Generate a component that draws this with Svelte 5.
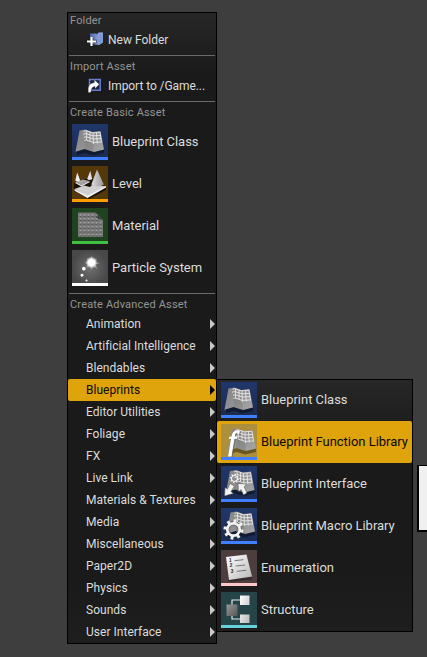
<script>
  const basic = [
    { label: 'Blueprint Class', icon: 'blueprint', bar: '#4080ff' },
    { label: 'Level', icon: 'level', bar: '#ff9c00' },
    { label: 'Material', icon: 'material', bar: '#40c040' },
    { label: 'Particle System', icon: 'particle', bar: '#ffffff' }
  ];
  const advanced = ['Animation', 'Artificial Intelligence', 'Blendables', 'Blueprints', 'Editor Utilities', 'Foliage', 'FX', 'Live Link', 'Materials & Textures', 'Media', 'Miscellaneous', 'Paper2D', 'Physics', 'Sounds', 'User Interface'];
  const blueprints = [
    { label: 'Blueprint Class', icon: 'blueprint', bar: '#4080ff' },
    { label: 'Blueprint Function Library', icon: 'function', bar: '#4080ff', active: true },
    { label: 'Blueprint Interface', icon: 'interface', bar: '#4080ff' },
    { label: 'Blueprint Macro Library', icon: 'macro', bar: '#4080ff' },
    { label: 'Enumeration', icon: 'enumeration', bar: '#ffc8c8' },
    { label: 'Structure', icon: 'structure', bar: '#68d0da' }
  ];
  const teeth = [0, 45, 90, 135, 180, 225, 270, 315];
  const dots = [0, 1, 2, 3, 4, 5];
</script>

{#snippet gear(cx, cy, r)}
  <g fill="#f2f2f2" transform="translate({cx} {cy})">
    <circle r={r * 0.85} fill="none" stroke="#222" stroke-opacity=".5" stroke-width={r * 0.55} />
    {#each teeth as a}
      <rect x={-r * 0.19} y={-r * 1.32} width={r * 0.38} height={r * 0.5} transform="rotate({a + 10})" />
    {/each}
    <circle r={r * 0.82} fill="none" stroke="#f2f2f2" stroke-width={r * 0.36} />
  </g>
{/snippet}

{#snippet sheet()}
  <path d="M5 27 13 25 21 27 32 25 32 29 21 31.5 13 29 5 31z" fill="#000" opacity=".4" />
  <path d="M7.5 6.5 13.5 5.5 20.5 8 28.5 7 32 25.5 22 28 12.5 25 3.5 27.8z" fill="url(#paper)" />
  <path d="M13.5 12 20.5 15 22 28 12.5 25z" fill="#666" opacity=".25" />
  <g fill="none" stroke="#e8e8e8" stroke-width=".9">
    <path d="M11.5 7.3 14 6.7 20.5 8.8 28 8.2M11 10.2 14 9.6 20.8 11.8 28.6 11.4M12 13.2 14 12.8 21 15 29 14.6M12.5 16.4 14 16 21.3 18.4 29.5 18" />
    <path d="M14.6 7V16M18 8V17.3M21 9 21.4 20M24.5 8.5 25.3 19.5M28 8.2 29.5 18.5" />
  </g>
{/snippet}

{#snippet asset(kind, bar)}
  <svg class="thumb" viewBox="0 0 36 36" width="36" height="36">
    <defs>
      <linearGradient id="paper" x2="1" y2="1"><stop stop-color="#858585" /><stop offset=".45" stop-color="#8f8f8f" /><stop offset="1" stop-color="#a8a8a8" /></linearGradient>
      <linearGradient id="blue" y2="1" x2="0"><stop stop-color="#20376c" /><stop offset="1" stop-color="#1b2a4e" /></linearGradient>
      <linearGradient id="light" x2="1" y2="1"><stop stop-color="#fff" /><stop offset="1" stop-color="#b8b8b8" /></linearGradient>
      <linearGradient id="dark" x2="1" y2="1"><stop stop-color="#999" /><stop offset="1" stop-color="#555" /></linearGradient>
      <linearGradient id="cone"><stop stop-color="#f2f2f2" /><stop offset=".5" stop-color="#e2e2e2" /><stop offset="1" stop-color="#999" /></linearGradient>
      <radialGradient id="grey"><stop stop-color="#707070" /><stop offset="1" stop-color="#484848" /></radialGradient>
      <radialGradient id="glow"><stop stop-color="#fff" /><stop offset=".5" stop-color="#fff" /><stop offset="1" stop-color="#fff" stop-opacity="0" /></radialGradient>
    </defs>
    {#if kind === 'blueprint'}
      <rect width="36" height="36" fill="url(#blue)" />
      {@render sheet()}
    {:else if kind === 'function'}
      <rect width="36" height="36" fill="#ae8f3b" />
      <g transform="translate(3 -1)">{@render sheet()}</g>
      <g font-family="Liberation Serif, serif" font-style="italic" font-size="27">
        <text x="7.5" y="26" fill="#fff" stroke="#fff" stroke-width="1.1" style="paint-order: stroke; filter: drop-shadow(1px 1px 0 #5558)">f</text>
      </g>
    {:else if kind === 'interface'}
      <rect width="36" height="36" fill="url(#blue)" />
      <g transform="translate(1.5 -1.5)">{@render sheet()}</g>
      {@render gear(13.5, 12.5, 3.6)}
      <path d="M9 17.5 13.5 20 10 25.5 12.5 27.5 3.5 30 4 21.5 6.5 23zM17 17.5 25.5 18 23.2 20.8 26 27 22.5 29 20 23.5 17.5 26z" fill="#f2f2f2" stroke="#444" stroke-width=".5" />
    {:else if kind === 'macro'}
      <rect width="36" height="36" fill="url(#blue)" />
      <g transform="translate(2 -2)">{@render sheet()}</g>
      {@render gear(12.5, 21.5, 7.6)}
    {:else if kind === 'level'}
      <rect width="36" height="36" fill="#553808" />
      <path d="M2 17 12 13 20 13 34 21 34 24 17 33 2 25z" fill="#191204" />
      <path d="M3.5 16 11 13.5 17.5 15 9.5 19z" fill="#a5a5a5" />
      <path d="M3.5 16V17.2L9.5 20.5 17.5 16.3V15L9.5 19z" fill="#e8e8e8" />
      <path d="M2.5 23 12 19.5 18 21 21 18 34 20.5 15.5 30z" fill="#d0d0d0" />
      <path d="M2.5 23 15.5 29.5 34 20V21.5L15.5 32 2.5 24.7z" fill="#f3f3f3" />
      <path d="M5.2 6.5 8.2 14.5Q5.5 16.5 3.3 14.5zM18.3 4.7 20.2 13Q17.5 15 15.2 13zM25 3.5 31.8 18.5Q25 22.5 19.3 18.5z" fill="url(#cone)" />
    {:else if kind === 'material'}
      <rect width="36" height="36" fill="#20431f" />
      <path d="M6 4.5H23.5L31 12V29H6z" fill="#777" />
      <path d="M23.5 4.5 31 12 24.5 10.5z" fill="#3d443d" />
      {#each dots as row}
        {#each dots as col}
          {#if row > 1 || col < 5}
            <rect x={7.5 + col * 4} y={6.2 + row * 3.9} width="2.2" height="1.5" rx=".7" fill="#a0a0a0" />
            <rect x={7.5 + col * 4} y={8 + row * 3.9} width="2.4" height=".9" fill="#585858" />
          {/if}
        {/each}
      {/each}
    {:else if kind === 'particle'}
      <rect width="36" height="36" fill="url(#grey)" />
      <path d="M19.5 5.5 21 10.5 25 8.5 23.5 12 28 13 23.5 14.5 25.5 19 21 16.5 19.5 20 18 16 14 18 16 14 12.5 13 16 11 15 8 18 10z" fill="#fff" opacity=".35" />
      <circle cx="19.5" cy="12.5" r="6" fill="url(#glow)" />
      <circle cx="11.8" cy="18.7" r="2.4" fill="url(#glow)" />
      <circle cx="10" cy="25.2" r="2" fill="url(#glow)" />
      <circle cx="14.5" cy="30.5" r="1.5" fill="url(#glow)" opacity=".8" />
    {:else if kind === 'enumeration'}
      <rect width="36" height="36" fill="#4d3d3d" />
      <path d="M7 29 31 27 31 29.5 8 32z" opacity=".3" />
      <path d="M5 7 25.5 4.5 31 26.5 8 30z" fill="url(#light)" />
      <g font-family="Liberation Sans, sans-serif" font-size="4.7" font-weight="bold" fill="#222">
        <text x="8" y="11.8">1</text><text x="8.8" y="17.4">2</text><text x="9.8" y="23">3</text>
      </g>
      <path d="M13.5 10.7 22.5 9.7M14.7 16 24 15M15.8 21.3 25.5 20.3" stroke="#666" stroke-width=".9" />
    {:else if kind === 'structure'}
      <rect width="36" height="36" fill="#244447" />
      <path d="M11 14V8H20M11 21V27H20" fill="none" stroke="#e8e8e8" stroke-width="1.2" />
      <path d="M5.5 12.5H16.5V24H5.5z" fill="url(#dark)" />
      <path d="M19 3.5H28.5V13H19zM19 22.5H28.5V31H19z" fill="url(#light)" />
    {/if}
    <rect y="33" width="36" height="3" fill={bar} />
  </svg>
{/snippet}

<main>
  <nav class="menu">
    <h2 class="first">Folder</h2>
    <div class="action">
      <svg width="16" height="16" viewBox="0 0 16 16">
        <defs><linearGradient id="fold"><stop stop-color="#4c60aa" /><stop offset="1" stop-color="#a9bdea" /></linearGradient></defs>
        <path d="M3 1.5 9 1.5 10 2.3 11.5 .5 15.8 .5 15.8 10.5 12 13 3 12z" fill="url(#fold)" />
        <path d="M12 2.5 15.8 .5V10.5L12 13z" fill="#7e98d8" />
        <path d="M4.5 5v9.5M-.5 9.5h10" stroke="#111" stroke-width="3.4" stroke-opacity=".7" />
        <path d="M4.5 5v9M0 9.5h9" stroke="#fff" stroke-width="2.2" />
      </svg>
      <span>New Folder</span>
    </div>
    <hr />
    <h2>Import Asset</h2>
    <div class="action">
      <svg width="16" height="16" viewBox="0 0 16 16">
        <path d="M2.5 1.5H13.2V12.2H2.5z" fill="#192442" stroke="#6681cf" stroke-width="1.5" />
        <path d="M7.3 1.8 12.3 6.2 8 10.8V8.4Q4.2 8.5 3.8 14.5L1.2 14.5Q0 5.3 7.3 4.6z" fill="#fff" stroke="#111" stroke-width=".3" />
      </svg>
      <span class="import">Import to /Game...</span>
    </div>
    <hr />
    <h2>Create Basic Asset</h2>
    {#each basic as item}
      <div class="asset">{@render asset(item.icon, item.bar)}<span>{item.label}</span></div>
    {/each}
    <hr />
    <h2>Create Advanced Asset</h2>
    {#each advanced as label}
      <div class="category" class:active={label === 'Blueprints'}><span>{label}</span><i></i></div>
    {/each}
  </nav>

  <nav class="menu submenu">
    {#each blueprints as item}
      <div class="asset" class:active={item.active}>{@render asset(item.icon, item.bar)}<span>{item.label}</span></div>
    {/each}
  </nav>
  <aside class="tooltip"></aside>
</main>

<style>
  :global(body) { margin: 0; background: #3e3e3e; }
  main {
    position: relative;
    width: 427px;
    height: 657px;
    box-sizing: border-box;
    padding: 12px 0 0 67px;
    overflow: hidden;
    background: #3e3e3e;
    font-family: Roboto, sans-serif;
    font-size: 13px;
    color: #dcdcdc;
  }
  .menu {
    width: 150px;
    height: 632px;
    box-sizing: border-box;
    border: 1px solid #000;
    background: linear-gradient(#272727, #1a1a1a 60px, #1a1a1a calc(100% - 60px), #1e1e1e);
    white-space: nowrap;
  }
  h2 {
    margin: 0;
    padding-left: 2px;
    height: 19px;
    line-height: 22px;
    font-size: 11px;
    font-weight: 400;
    letter-spacing: 0.17px;
    color: #959595;
  }
  h2.first { height: 16px; line-height: 15px; }
  hr { margin: 4px 1px 0; border: 0; height: 1px; background: #6a6a6a; }
  .action { display: flex; align-items: center; height: 22px; padding-left: 19px; font-size: 12px; letter-spacing: 0; }
  .action svg { margin-right: 5px; overflow: visible; }
  .import { letter-spacing: -0.07px; }
  .asset { display: flex; align-items: center; height: 42px; padding-left: 4px; letter-spacing: -0.03px; }
  .asset span { margin-left: 4px; line-height: 16px; padding-bottom: 1px; }
  .thumb { display: block; flex: none; }
  .category {
    display: flex;
    align-items: center;
    justify-content: space-between;
    height: 22px;
    box-sizing: border-box;
    padding: 0 1px 0 18px;
    font-size: 12px;
    letter-spacing: 0.03px;
  }
  .category i { border: solid transparent; border-width: 5px 0 5px 5px; border-left-color: #c8c8c8; }
  .active { background: #dfa30b; color: #0c0800; border-radius: 2px; }
  .category.active i { border-left-color: #000; }
  .submenu {
    position: absolute;
    left: 216px;
    top: 379px;
    width: 197px;
    height: 253px;
  }
  .submenu .asset:first-child { margin-top: -1px; }
  .tooltip {
    position: absolute;
    left: 417px;
    top: 465px;
    width: 20px;
    height: 64px;
    border: solid #000;
    border-width: 1px 0 2px 2px;
    background: #f0f0f0;
  }
</style>
